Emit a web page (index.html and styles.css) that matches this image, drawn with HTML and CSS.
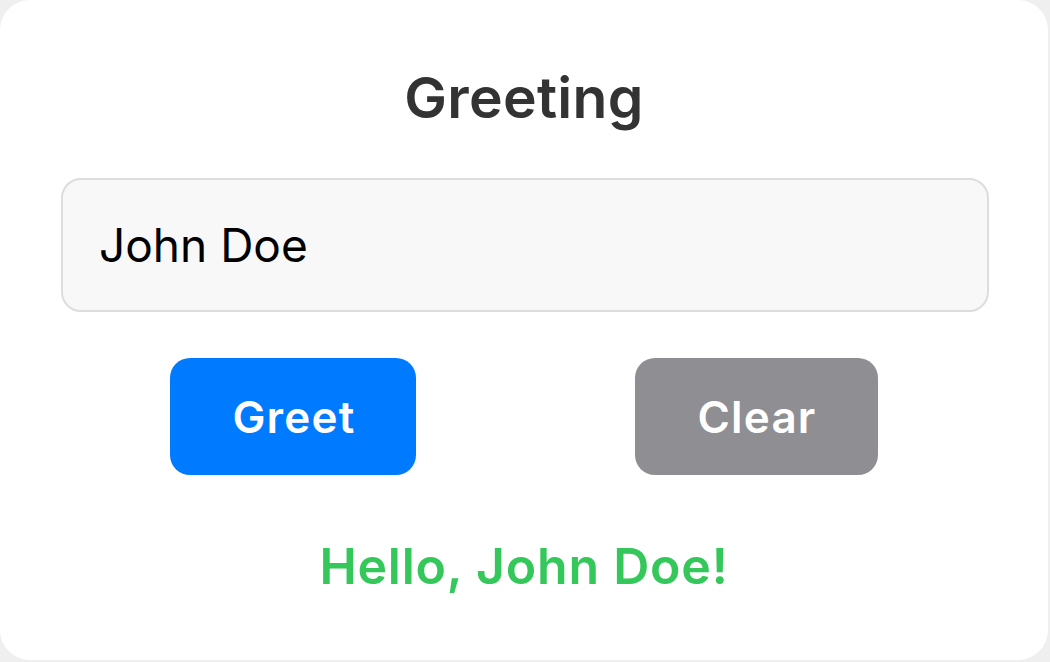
FILE: index.html
```html
<!DOCTYPE html>
<html lang="en">
<head>
<meta charset="utf-8">
<title>Greeting</title>
<link rel="stylesheet" href="styles.css">
</head>
<body>
<main class="card">
  <h1 class="title">Greeting</h1>
  <input class="name-input" type="text" value="John Doe" aria-label="Name">
  <div class="actions">
    <button class="btn btn-greet" type="button">Greet</button>
    <button class="btn btn-clear" type="button">Clear</button>
  </div>
  <p class="message">Hello, John Doe!</p>
</main>
</body>
</html>
```

FILE: styles.css
```css
* { box-sizing: border-box; }
html, body { margin: 0; padding: 0; }
body {
  width: 1050px;
  height: 662px;
  background: #efeff0;
  font-family: Inter, "Liberation Sans", Arial, sans-serif;
  overflow: hidden;
}
.card {
  width: 1048px;
  height: 660px;
  background: #ffffff;
  border-radius: 30px;
  padding: 64px 61px 0 61px;
  display: flex;
  flex-direction: column;
}
.title {
  margin: 0;
  font-size: 57px;
  line-height: 68px;
  font-weight: 600;
  letter-spacing: 0.3px;
  color: #333333;
  text-align: center;
}
.name-input {
  margin-top: 46px;
  width: 928px;
  height: 134px;
  border: 2px solid #dddddd;
  border-radius: 20px;
  background: #f8f8f8;
  padding: 0 36px;
  font-family: inherit;
  font-size: 46px;
  color: #000000;
  outline: none;
}
.actions {
  margin-top: 46px;
  display: flex;
  justify-content: space-around;
}
.btn {
  height: 117px;
  border: none;
  border-radius: 20px;
  padding: 0 61px 0 62px;
  font-family: inherit;
  font-size: 44px;
  font-weight: 600;
  letter-spacing: 1.2px;
  color: #ffffff;
}
.btn-greet { background: #007aff; }
.btn-clear { background: #8e8e93; }
.message {
  margin: 62px 0 0 0;
  font-size: 50px;
  line-height: 58px;
  font-weight: 600;
  letter-spacing: 0.8px;
  color: #34c759;
  text-align: center;
}
```
